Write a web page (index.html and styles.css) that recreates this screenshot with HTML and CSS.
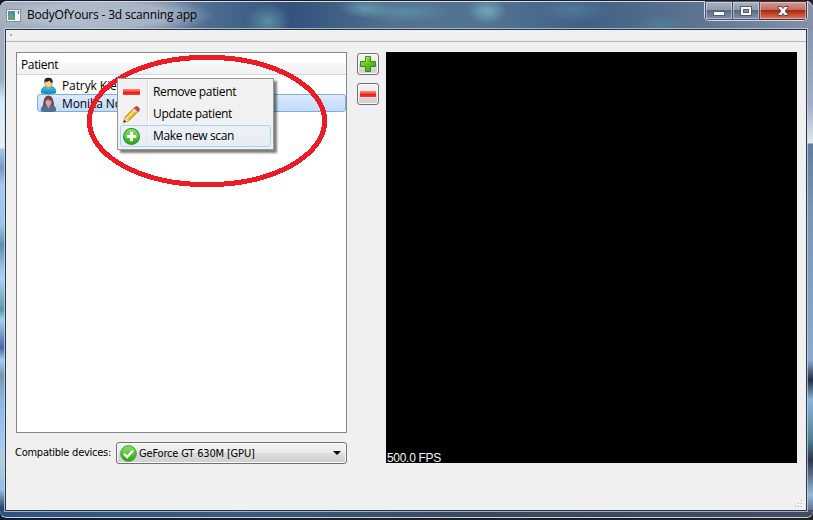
FILE: index.html
```html
<!DOCTYPE html>
<html lang="en">
<head>
<meta charset="utf-8">
<title>BodyOfYours - 3d scanning app</title>
<link rel="stylesheet" href="styles.css">
</head>
<body>
<svg class="defs" width="0" height="0" aria-hidden="true">
  <defs>
    <linearGradient id="red" x2="0" y2="1"><stop offset="0" stop-color="#ff8a7c"/><stop offset=".45" stop-color="#f8453a"/><stop offset=".5" stop-color="#ee1008"/><stop offset="1" stop-color="#f5403a"/></linearGradient>
    <linearGradient id="green" x2="0" y2="1"><stop offset="0" stop-color="#8de36a"/><stop offset="1" stop-color="#27a512"/></linearGradient>
    <linearGradient id="plus" x2="1" y2="1"><stop offset="0" stop-color="#9be52b"/><stop offset="1" stop-color="#2f9f12"/></linearGradient>
    <linearGradient id="blue" x2="0" y2="1"><stop offset="0" stop-color="#3ecbf0"/><stop offset="1" stop-color="#0789c4"/></linearGradient>
  </defs>
</svg>
<div class="window">
  <header class="titlebar">
    <svg class="app-icon" width="15" height="13" viewBox="0 0 15 13"><rect x=".5" y=".5" width="14" height="12" fill="#f7f7f7" stroke="#888f98"/><rect x="2" y="2" width="7" height="9" fill="#4c8f9d"/><path d="M2 11V7l3-3 4 7z" fill="#63a473"/><path d="M10 2h3v2h-3z" fill="#dce4ea"/><path d="M12 2h1v3h-1z" fill="#287f8b"/></svg>
    <h1 class="title">BodyOfYours - 3d scanning app</h1>
    <div class="controls">
      <span class="control"><svg width="12" height="12" viewBox="0 0 12 12"><rect x=".5" y="6.5" width="11" height="4" fill="#fff" stroke="#555d72"/></svg></span>
      <span class="control"><svg width="12" height="12" viewBox="0 0 12 12"><rect x=".5" y="1.5" width="11" height="9" fill="#fff" stroke="#555d72"/><rect x="3.5" y="4.5" width="5" height="3" fill="#8490a6" stroke="#555d72"/></svg></span>
      <span class="control close"><svg width="12" height="12" viewBox="0 0 12 12"><path d="M1 1.500h3.500l1.500 2 1.500-2H11v1L8.200 6l2.800 3.500v1H7.500L6 8.500l-1.500 2H1v-1L3.800 6 1 2.500z" fill="#fff" stroke="#5f4150"/></svg></span>
    </div>
  </header>
  <main class="client">
    <div class="toolbar"></div>
    <div class="content">
      <section class="left">
        <div class="tree">
          <div class="tree-head"><span class="t-head">Patient</span></div>
          <div class="row">
            <svg width="17" height="17" viewBox="0 0 17 17"><path d="M1.500 16q-1-6 5-6.500h4q6 .500 5 6.500-7 1.500-14 0z" fill="url(#blue)" stroke="#126e99" stroke-width=".7"/><path d="M6 9l2.500 3L11 9z" fill="#f6c98b"/><ellipse cx="8.500" cy="6" rx="3.600" ry="4.600" fill="#ffd27e" stroke="#a96b20" stroke-width=".6"/><path d="M4.500 6Q3.500 .800 8 .700q5.500-.2 4.500 5.300Q10 5.500 9.500 3.500 7 5.500 5.500 4.500z" fill="#27201b"/></svg>
            <span class="t-name">Patryk Kiepura</span>
          </div>
          <div class="row selected">
            <svg width="17" height="17" viewBox="0 0 17 17"><path d="M3 12Q3 .500 8.500 .600 14 .500 14 12z" fill="#75424b"/><path d="M1.500 16q-1-5.500 5-6h4q6 .500 5 6-7 1.500-14 0z" fill="#4e7190" stroke="#435d7b" stroke-width=".7"/><path d="M6.500 10l2 3.500 2-3.500z" fill="#dc97a0"/><ellipse cx="8.500" cy="6.800" rx="3" ry="4" fill="#dba6a0"/><path d="M5 6q0-4 3.500-4T12 6Q9 6 8 4 7 6 5 6z" fill="#75424b"/></svg>
            <span class="t-name">Monika Nowak</span>
          </div>
        </div>
        <div class="device-row">
          <span class="device-label">Compatible devices:</span>
          <div class="combo">
            <svg width="17" height="17" viewBox="0 0 17 17"><circle cx="8.500" cy="8.500" r="7.800" fill="url(#green)" stroke="#30991f"/><path d="M4 8.800l3.200 3.300L13 5.500" fill="none" stroke="#fff" stroke-width="2.300"/></svg>
            <span class="t-device">GeForce GT 630M [GPU]</span>
            <i class="arrow"></i>
          </div>
        </div>
      </section>
      <nav class="tools">
        <button class="tool" aria-label="Add"><svg width="16" height="16" viewBox="0 0 16 16"><path d="M5.500 .500h5v5h5v5h-5v5h-5v-5h-5v-5h5z" fill="url(#plus)" stroke="#358b23"/><path d="M6.500 6.500v-5h3" fill="none" stroke="#c1f36f" opacity=".7"/></svg></button>
        <button class="tool" aria-label="Remove"><svg width="16" height="16" viewBox="0 0 16 16"><rect y="5" width="16" height="6" fill="url(#red)"/></svg></button>
      </nav>
      <section class="viewport"><span class="fps">500.0 FPS</span></section>
    </div>
    <svg class="grip" width="8" height="8" viewBox="0 0 8 8"><path d="M6 0h2v2H6zM3 3h2v2H3zM6 3h2v2H6zM0 6h2v2H0zM3 6h2v2H3zM6 6h2v2H6z" fill="#fff"/><path d="M6 0h1v1H6zM3 3h1v1H3zM6 3h1v1H6zM0 6h1v1H0zM3 6h1v1H3zM6 6h1v1H6z" fill="#a2a2a2"/></svg>
  </main>
</div>
<svg class="annotation" width="244" height="138" viewBox="0 0 244 138" shape-rendering="crispEdges"><ellipse cx="122" cy="69" rx="117.700" ry="63.700" fill="none" stroke="#ed1c24" stroke-width="5"/></svg>
<div class="menu">
  <div class="item"><svg width="17" height="16" viewBox="0 0 16 16" preserveAspectRatio="none"><rect y="5" width="16" height="6" fill="url(#red)"/></svg><span>Remove patient</span></div>
  <div class="item"><svg width="17" height="17" viewBox="0 0 16 16"><path d="M.500 15.500l1.500-5L11 1.500l3.500 3.300-9 9z" fill="#f8bb22" stroke="#a86310" stroke-width=".8"/><path d="M3.500 11.500l8.500-8.500" stroke="#fff08a" stroke-width="1.300"/><path d="M10 2.500L12 .700q1-.7 2.500.7t.9 2.400l-1.900 2z" fill="#dd3f35" stroke="#a52e20" stroke-width=".6"/><path d="M9.500 3.200l3.300 3.200 1-1-3.300-3.200z" fill="#dadada"/><path d="M.500 15.500l1.500-5 3.500 3.300z" fill="#f5d9a4"/><path d="M.400 15.600l.8-2.600 1.800 1.800z" fill="#3b2c23"/></svg><span>Update patient</span></div>
  <div class="item active"><svg width="17" height="17" viewBox="0 0 16 16"><circle cx="8" cy="8" r="7.500" fill="url(#green)" stroke="#31952a"/><path d="M6.500 3.500h3v3h3v3h-3v3h-3v-3h-3v-3h3z" fill="#fff"/></svg><span>Make new scan</span></div>
</div>
</body>
</html>
```
FILE: styles.css
```css
* { box-sizing: border-box; }
body {
  margin: 0;
  width: 813px;
  height: 520px;
  overflow: hidden;
  background: linear-gradient(90deg, #111c31, #1c1e26 35%, #202025);
  font: 12px/16px "Open Sans", "Noto Sans", sans-serif;
  color: #000;
}
.defs { position: absolute; }
span, h1 { white-space: nowrap; }

.window {
  width: 813px;
  height: 517px;
  margin-top: 1px;
  padding: 0 6px 0 5px;
  border-radius: 7px 7px 6px 6px;
  background:
    linear-gradient(90deg, #31527d, #3d5a7b 30%, #39485c 60%, #424c60) 0 100% / 100% 8px no-repeat,
    linear-gradient(#8794ae, #a2afca 75px, #e2e8ef 113px, #617d9d 114px, #7895b6 180px, #8baace 330px, #1f3043 350px, #8bb6dc 370px, #537e96 410px, #293647 430px, #96bada 465px, #3e4359 490px) 100% 29px / 7px 488px no-repeat,
    linear-gradient(#a3adbb, #9dafc5 50px, #d7eafa 70px, #e8eef3 118px, #a4c6ec 119px, #7799c2 138px, #a6c9f0 155px, #9cc4ea 195px, #5f8fab 215px, #a0c6ee 240px, #a8cdf6 250px, #5a99a2 280px, #a8cdf6 290px, #4868a7 318px, #a8cdf6 330px, #7499a8 345px, #8eb6e2 370px, #a0c7f2 410px, #b5cfd6 430px, #94bde8 460px, #2c4565 478px) 0 29px / 6px 488px no-repeat,
    #466589;
  box-shadow: inset 0 1px #d4dce6, inset 0 -1px #c6d1dd;
}
.titlebar {
  display: flex;
  align-items: flex-start;
  height: 29px;
  margin: 0 -6px 0 -5px;
  padding: 0 5px 0 6px;
  border-top: 1px solid #d5dde6;
  border-radius: 7px 7px 0 0;
  background:
    radial-gradient(ellipse 112px 20px at 102px 13px, rgba(200,210,222,.62), rgba(200,210,222,.55) 60%, transparent),
    radial-gradient(ellipse 22px 18px at 268px 20px, rgba(101,159,172,.75), transparent),
    radial-gradient(ellipse 26px 10px at 365px 6px, rgba(103,159,173,.85), transparent),
    radial-gradient(ellipse 50px 11px at 405px 10px, rgba(96,144,167,.8), transparent),
    radial-gradient(ellipse 20px 13px at 487px 9px, rgba(118,179,189,.85), transparent),
    radial-gradient(ellipse 35px 12px at 575px 8px, rgba(82,127,159,.8), transparent),
    radial-gradient(ellipse 25px 12px at 660px 24px, rgba(81,127,159,.8), transparent),
    linear-gradient(90deg, #a4afbd, #7589a3 20%, #4b6c91 26%, #34527d 36%, #50718f 48%, #527393 60%, #416184 72%, #58718f 84%, #8590a8);
}
.app-icon { margin-top: 7px; }
.title {
  margin: 5px 0 0 6px;
  font-size: 12px;
  font-weight: 400;
  line-height: 16px;
  letter-spacing: -.18px;
}
.controls {
  display: flex;
  margin-left: auto;
  height: 20px;
  margin-top: -1px;
  border: 1px solid #d5dae3;
  border-top: 0;
  border-radius: 0 0 5px 5px;
  overflow: hidden;
}
.control {
  display: flex;
  justify-content: center;
  align-items: center;
  width: 28px;
  border: 1px solid #4a556b;
  box-shadow: inset 0 0 0 1px rgba(235,240,248,.45);
  background: linear-gradient(#aab3c3, #8c99ad 48%, #5a6b84 50%, #8492aa);
}
.control + .control { width: 27px; border-left: 0; }
.control + .control.close { width: 47px; border-color: #532b35; background: linear-gradient(#cf9b94, #c26c5c 48%, #aa2810 50%, #cb563b 80%, #d17c61); }

.client {
  position: relative;
  width: 802px;
  height: 482px;
  margin-top: -1px;
  border: 1px solid #29394c;
  border-top-color: #26323d;
  background: #f0f0f0;
  outline: 1px solid rgba(205,218,230,.7);
}
.toolbar { height: 12px; border-bottom: 1px solid #b4b4b4; background: #f0f0f0 radial-gradient(circle at 5px 5px, #aaa 1px, transparent 1.5px); }
.content { display: flex; padding: 10px 9px 0 10px; }
.left { width: 331px; }
.tree { height: 381px; border: 1px solid #828790; background: #fff; }
.tree-head { height: 22px; margin-bottom: 1px; padding: 4px 4px 0; border-bottom: 1px solid #d5d5d5; background: linear-gradient(#fff 45%, #f7f8fa 46%, #f1f2f4); }
.t-head { letter-spacing: -.35px; }
.row { display: flex; align-items: center; height: 18px; margin-left: 20px; padding-left: 2px; border: 1px solid transparent; gap: 5px; }
.row.selected { border-color: #84acdd; border-radius: 3px; background: linear-gradient(#dceafc, #c1dbfc); }
.t-name { padding-top: 1px; letter-spacing: -.1px; }

.device-row { display: flex; margin-top: 9px; }
.device-label { width: 100px; margin-left: -1px; padding-top: 3px; font: 11px/16px "DejaVu Sans Condensed", "DejaVu Sans", sans-serif; font-stretch: condensed; letter-spacing: -.25px; }
.combo { display: flex; align-items: center; width: 231px; height: 22px; margin-left: 1px; padding: 0 5px 0 3px; border: 1px solid #707070; border-radius: 3px; box-shadow: inset 0 0 0 1px #fafafa; background: linear-gradient(#f2f2f2, #ebebeb 48%, #dddddd 50%, #cfcfcf); }
.t-device { margin-left: 2px; padding-top: 1px; font: 11px/16px "DejaVu Sans Condensed", "DejaVu Sans", sans-serif; font-stretch: condensed; letter-spacing: -.17px; }
.arrow { margin-left: auto; border: 4px solid transparent; border-top-color: #000; border-bottom: 0; }

.tools { display: flex; flex-direction: column; gap: 8px; width: 22px; margin: 1px 7px 0 10px; }
.tool { display: flex; align-items: center; justify-content: center; width: 22px; height: 22px; padding: 0; border: 1px solid #707070; border-radius: 3px; box-shadow: inset 0 0 0 1px #fafafa; background: linear-gradient(#f2f2f2, #ebebeb 48%, #dddddd 50%, #cfcfcf); }
.viewport { display: flex; align-items: flex-end; width: 411px; height: 411px; background: #000; color: #f4f4f4; }
.fps { margin: 0 0 -3px 1px; font: 12px/15px "Liberation Sans", Arial, sans-serif; letter-spacing: -.3px; }
.grip { position: absolute; right: 3px; bottom: 2px; }

.annotation { position: absolute; left: 85px; top: 52px; }
.menu {
  position: absolute;
  left: 117px;
  top: 78px;
  width: 157px;
  height: 72px;
  padding: 2px;
  border: 1px solid #979797;
  box-shadow: 3px 3px 2px rgba(0,0,0,.5);
  background: linear-gradient(90deg, transparent 29px, #e0e0e0 29px, #e0e0e0 30px, #fff 30px, #fff 31px, transparent 31px) #f1f1f1;
}
.item { display: flex; align-items: center; width: 151px; height: 22px; padding-left: 2px; border: 1px solid transparent; gap: 13px; letter-spacing: -.35px; }
.item.active { border-color: #aecff7; border-radius: 3px; background: linear-gradient(rgba(235,242,251,.55), rgba(220,233,248,.55)); }
```
